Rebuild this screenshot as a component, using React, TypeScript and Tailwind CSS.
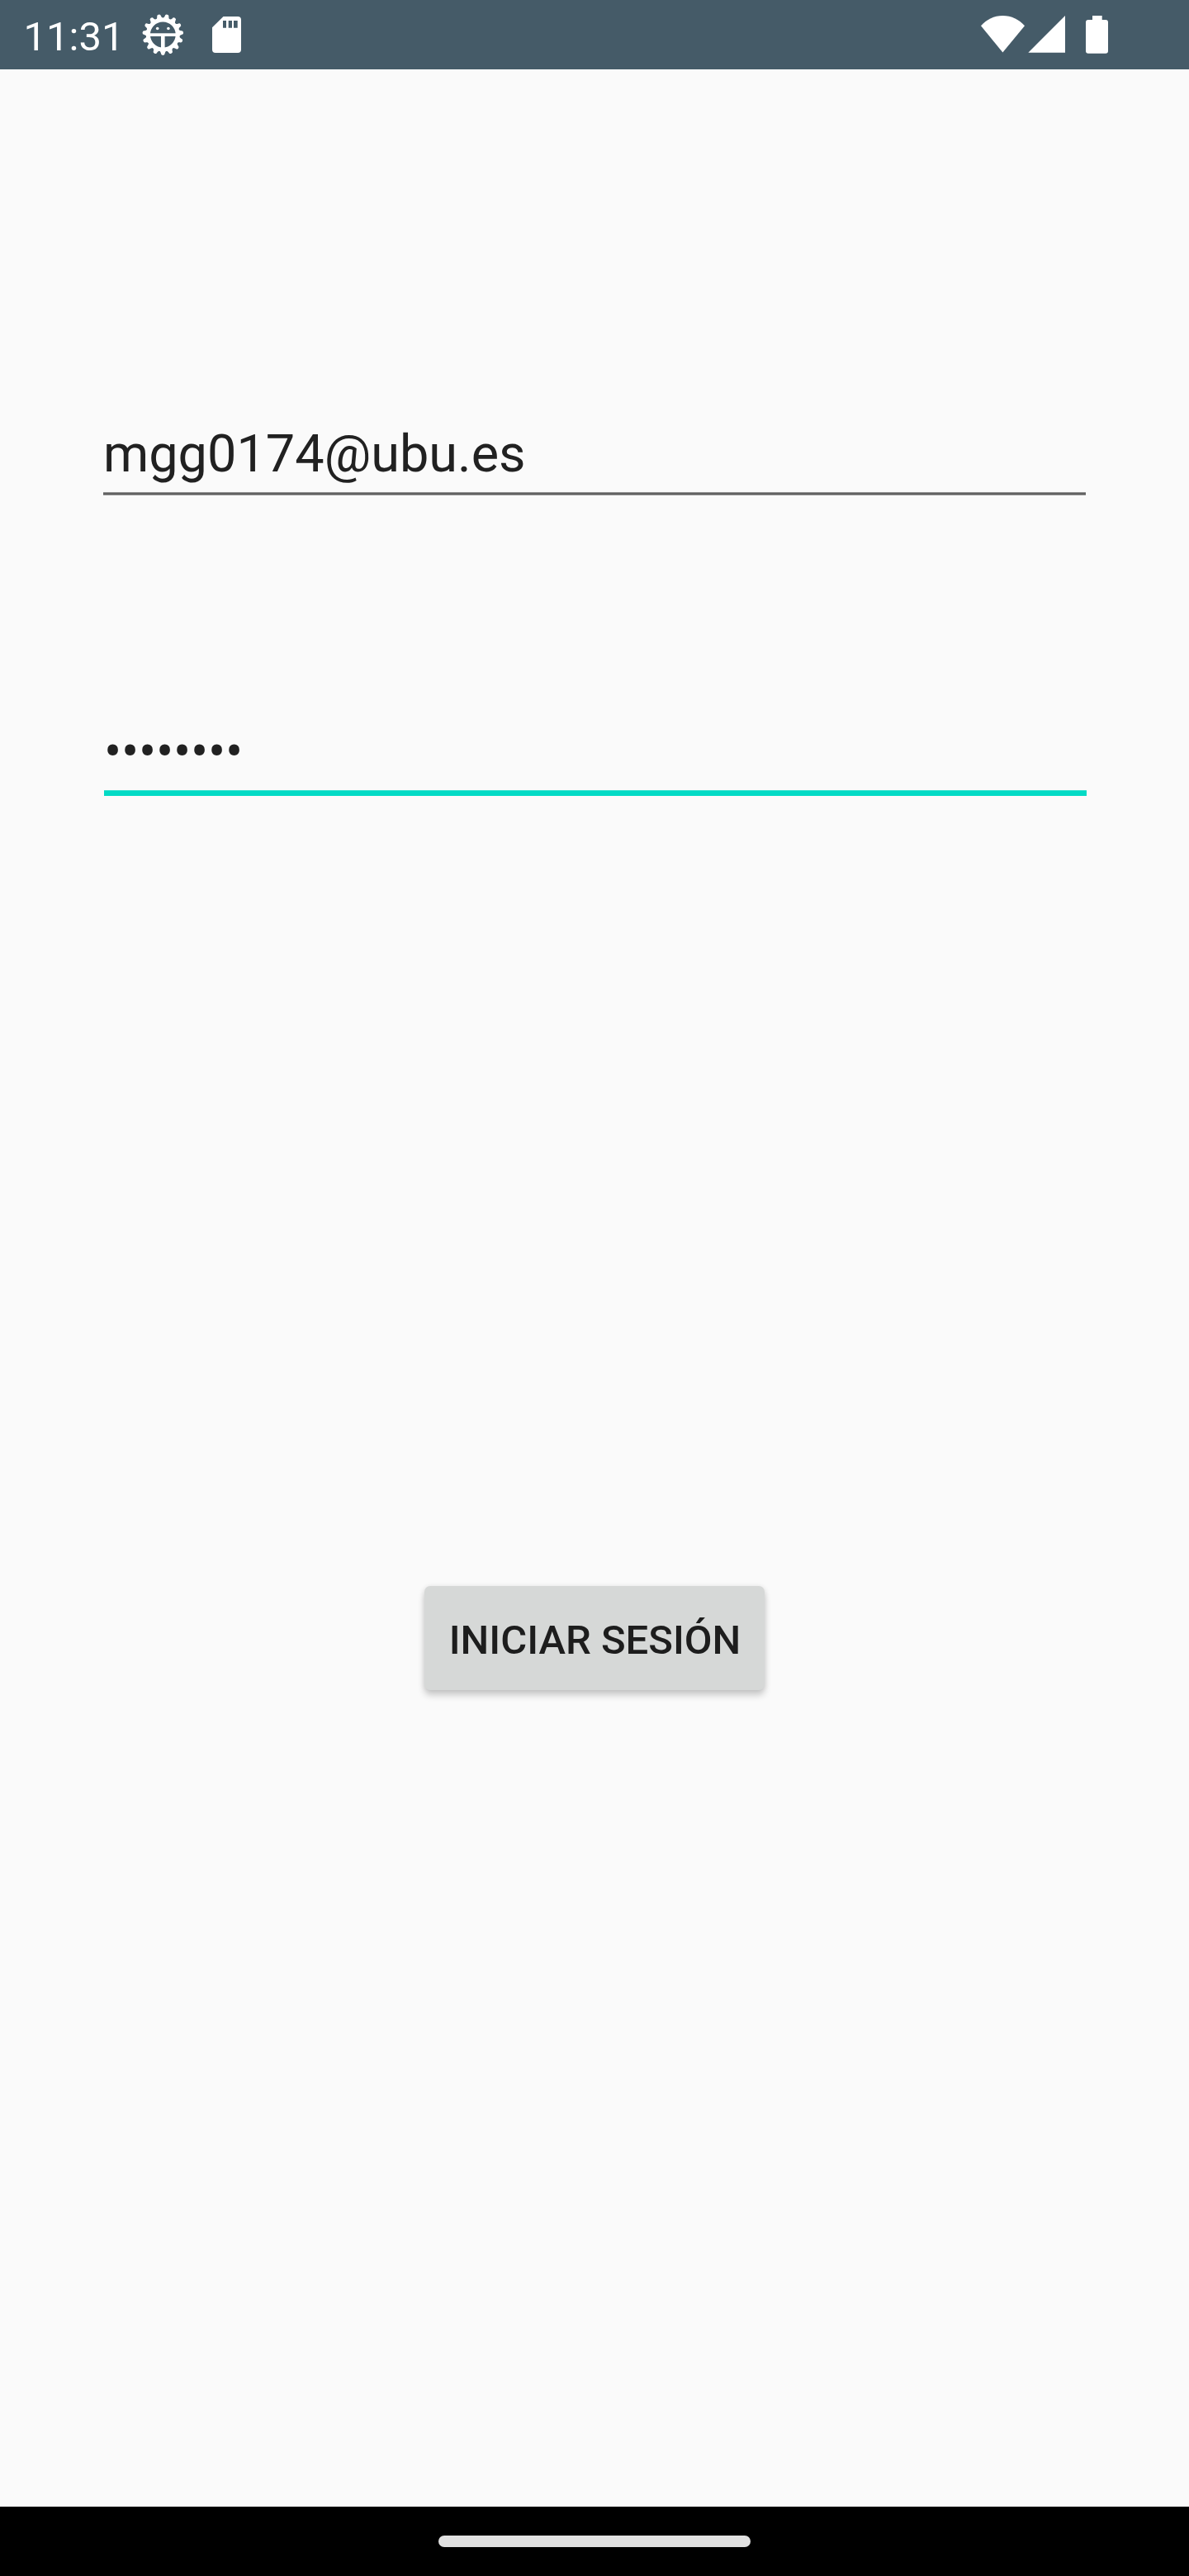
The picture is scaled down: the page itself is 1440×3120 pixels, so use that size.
const teeth = Array.from({ length: 15 }, (_, i) => (i * 360) / 15);

function DebugIcon() {
  return (
    <svg className="ml-[22px] h-[50px] w-[50px] shrink-0" viewBox="-25.3 -25 50 50" fill="#fff">
      <circle r="17.9" fill="none" stroke="#fff" strokeWidth="5" />
      {teeth.map((a) => (
        <path
          key={a}
          transform={`rotate(${a})`}
          d="M-5 18.8C-3.4 19.8-2.8 21-2.4 22.5A2.4 2.4 0 0 0 2.4 22.5C2.8 21 3.4 19.8 5 18.8Z"
        />
      ))}
      <rect x="-16" y="-1.7" width="32" height="3.7" />
      <rect x="-2.3" y="1" width="4.6" height="16" />
      <circle cx="-6.6" cy="-7.5" r="1.8" />
      <circle cx="6.6" cy="-7.5" r="1.8" />
    </svg>
  );
}

function StatusBar() {
  return (
    <header className="flex h-[84px] items-center bg-[#455b68] text-white">
      <span className="ml-[28.5px] mt-[5px] w-[121.5px] whitespace-nowrap text-[49px] leading-[58px]">11:31</span>
      <DebugIcon />
      <svg className="ml-[35px] h-[44px] w-[35px] shrink-0" viewBox="0 0 35 44" fill="#fff">
        <path
          fillRule="evenodd"
          d="M13.5 0H31a4 4 0 0 1 4 4V40a4 4 0 0 1-4 4H4a4 4 0 0 1-4-4V13.2ZM13 5V13.7H17V5ZM19.7 5V13.7H24V5ZM26 5V13.7H30.7V5Z"
        />
      </svg>
      <svg className="ml-auto mr-[98px] h-[46px] w-[154px] shrink-0" viewBox="0 0 154 46" fill="#fff">
        <path d="M0 12.2C7 4.5 16 0 26.4 0S46 4.5 53 12.2L26.4 44.5Z" />
        <path d="M102 0V44.7H57.3Z" />
        <path d="M135 0H146.7V5H151a3 3 0 0 1 3 3V42.7a3 3 0 0 1-3 3H130a3 3 0 0 1-3-3V8a3 3 0 0 1 3-3H135Z" />
      </svg>
    </header>
  );
}

export default function App() {
  return (
    <div className="flex h-[3120px] w-[1440px] flex-col bg-[#fafafa] font-[Roboto,sans-serif] text-[#212121]">
      <StatusBar />
      <main className="flex flex-1 flex-col">
        <div className="ml-[125px] mt-[429px] flex h-[87px] w-[1190px] flex-col justify-between">
          <span className="text-[63px] leading-[74px]">mgg0174@ubu.es</span>
          <div className="h-[4px] border-y border-[#929292] bg-[#626262]" />
        </div>
        <div className="ml-[126px] mt-[274px] flex h-[90px] w-[1190px] flex-col justify-between">
          <span className="text-[63px] leading-[74px] tracking-[-0.25px]">••••••••</span>
          <div className="h-[7px] border-t border-[#35e0ce] bg-[#03dac5]" />
        </div>
        <button className="ml-[514px] mt-[957px] flex h-[126px] w-[412px] items-center justify-center rounded-[7px] bg-[#d6d8d7] text-[49px] font-medium leading-[58px] text-[#1d1d1d] shadow-[0_6px_9px_rgba(0,0,0,0.2),0_0_6px_rgba(0,0,0,0.08)]">
          <span className="ml-[1px] mt-[6px] whitespace-nowrap">INICIAR SESIÓN</span>
        </button>
      </main>
      <footer className="flex h-[84px] items-center justify-center bg-black">
        <div className="h-[14px] w-[378px] rounded-full bg-[#e1e1e1]" />
      </footer>
    </div>
  );
}
